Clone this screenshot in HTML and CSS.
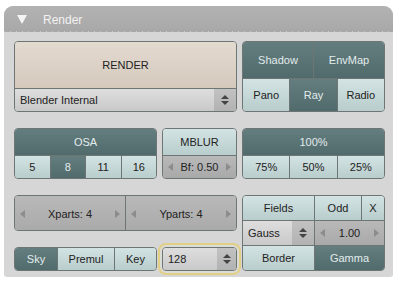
FILE: index.html
```html
<!DOCTYPE html>
<html lang="en">
<head>
    <meta charset="UTF-8">
    <title>Render</title>
    <link rel="stylesheet" href="styles.css">
</head>
<body>
    <div class="panel">
        <div class="panel-head">
            <svg class="toggle" width="10" height="9" viewBox="0 0 10 9"><polygon points="0,0 10,0 5,9" fill="#f4f4f4"/></svg>
            <span>Render</span>
        </div>

        <div class="panel-body">
            <!-- render button + renderer menu -->
            <div class="blk render-blk">
                <div class="row h46"><div class="c beige">RENDER</div></div>
                <div class="row h25">
                    <div class="c menu"><span class="menu-text">Blender Internal</span><span class="menu-arrow"><svg width="8" height="10" viewBox="0 0 8 10"><polygon points="0,4 4,0 8,4" fill="#444"/><polygon points="0,6 4,10 8,6" fill="#444"/></svg></span></div>
                </div>
            </div>

            <div class="blk shade-blk">
                <div class="row h36">
                    <div class="c dk">Shadow</div>
                    <div class="c dk">EnvMap</div>
                </div>
                <div class="row h35">
                    <div class="c lt">Pano</div>
                    <div class="c dk">Ray</div>
                    <div class="c lt">Radio</div>
                </div>
            </div>

            <!-- OSA -->
            <div class="blk osa-blk">
                <div class="row h26"><div class="c dk">OSA</div></div>
                <div class="row h25">
                    <div class="c lt">5</div>
                    <div class="c dk">8</div>
                    <div class="c lt">11</div>
                    <div class="c lt">16</div>
                </div>
            </div>

            <div class="blk mblur-blk">
                <div class="row h26"><div class="c lt">MBLUR</div></div>
                <div class="row h25">
                    <div class="c num"><i class="al"></i><span>Bf: 0.50</span><i class="ar"></i></div>
                </div>
            </div>

            <div class="blk size-blk">
                <div class="row h26"><div class="c dk">100%</div></div>
                <div class="row h25">
                    <div class="c lt">75%</div>
                    <div class="c lt">50%</div>
                    <div class="c lt">25%</div>
                </div>
            </div>

            <!-- parts -->
            <div class="blk parts-blk">
                <div class="row h36">
                    <div class="c num"><i class="al"></i><span>Xparts: 4</span><i class="ar"></i></div>
                    <div class="c num"><i class="al"></i><span>Yparts: 4</span><i class="ar"></i></div>
                </div>
            </div>

            <div class="blk fields-blk">
                <div class="row h25">
                    <div class="c lt w71">Fields</div>
                    <div class="c lt">Odd</div>
                    <div class="c lt w22">X</div>
                </div>
                <div class="row h25">
                    <div class="c menu w71"><span class="menu-text">Gauss</span><span class="menu-arrow"><svg width="8" height="10" viewBox="0 0 8 10"><polygon points="0,4 4,0 8,4" fill="#444"/><polygon points="0,6 4,10 8,6" fill="#444"/></svg></span></div>
                    <div class="c num"><i class="al"></i><span>1.00</span><i class="ar"></i></div>
                </div>
                <div class="row h25">
                    <div class="c lt w71">Border</div>
                    <div class="c dk">Gamma</div>
                </div>
            </div>

            <!-- alpha -->
            <div class="blk alpha-blk">
                <div class="row h24">
                    <div class="c dk w42">Sky</div>
                    <div class="c lt">Premul</div>
                    <div class="c lt w41">Key</div>
                </div>
            </div>

            <div class="blk depth-blk">
                <div class="row h24">
                    <div class="c menu"><span class="menu-text">128</span><span class="menu-arrow"><svg width="8" height="10" viewBox="0 0 8 10"><polygon points="0,4 4,0 8,4" fill="#444"/><polygon points="0,6 4,10 8,6" fill="#444"/></svg></span></div>
                </div>
            </div>
        </div>
    </div>
</body>
</html>
```
FILE: styles.css
```css
body {
    margin: 0;
    background-color: #fff;
    font-family: "Liberation Sans", Arial, sans-serif;
    font-size: 11px;
    color: #222;
}
.panel {
    margin: 6px 0 0 4px;
    width: 389px;
    height: 271px;
    background-color: #d6d6d6;
    border-radius: 9px 9px 3px 3px;
    overflow: hidden;
}
.panel-head {
    height: 26px;
    box-sizing: border-box;
    display: flex;
    align-items: center;
    gap: 16px;
    padding: 1px 0 0 13px;
    color: #f2f2f2;
    font-size: 12px;
    background:
        repeating-linear-gradient(90deg, #c6c6c6 0 1px, transparent 1px 6px) bottom / 100% 1px no-repeat,
        linear-gradient(#b2b2b2, #a8a8a8);
}
.panel-body {
    display: grid;
    grid-template-columns: 143px 75px 143px;
    grid-template-rows: 71px 51px 36px 24px;
    column-gap: 5px;
    row-gap: 16px;
    padding: 9px 0 0 10px;
}
.blk {
    box-sizing: border-box;
    border: 1px solid #6d7575;
    border-radius: 4px;
    overflow: hidden;
    display: flex;
    flex-direction: column;
}
.render-blk { grid-column: 1 / 3; grid-row: 1; }
.shade-blk { grid-column: 3; grid-row: 1; }
.osa-blk { grid-column: 1; grid-row: 2; }
.mblur-blk { grid-column: 2; grid-row: 2; }
.size-blk { grid-column: 3; grid-row: 2; }
.parts-blk { grid-column: 1 / 3; grid-row: 3; }
.fields-blk { grid-column: 3; grid-row: 3 / 5; }
.alpha-blk { grid-column: 1; grid-row: 4; }
.depth-blk {
    grid-column: 2;
    grid-row: 4;
    box-shadow: 0 0 0 2px #dcdcd6, 0 0 0 4px #e2cf86;
}

.row { display: flex; flex: 1; }
.row + .row { border-top: 1px solid #6d7575; }
.h46 { flex: 0 0 46px; }
.h36 { flex: 0 0 36px; }
.h35 { flex: 1; }
.h26 { flex: 0 0 26px; }
.h25 { flex: 1; }
.h24 { flex: 1; }

.c {
    flex: 1;
    display: flex;
    align-items: center;
    justify-content: center;
    white-space: nowrap;
}
.c + .c { border-left: 1px solid #6d7575; }
.w71 { flex: 0 0 71px; }
.w42 { flex: 0 0 42px; }
.w41 { flex: 0 0 41px; }
.w22 { flex: 0 0 22px; }

.beige { background: linear-gradient(#e3dad0, #d5c9bc); }
.dk {
    background: linear-gradient(#647e80, #516a6c);
    color: #e2ecec;
}
.lt { background: linear-gradient(#d3e3e3, #b9cdcd); }
.num {
    justify-content: space-between;
    padding: 0 5px;
    background: linear-gradient(#b9b9b9, #a9a9a9);
}
.al, .ar {
    width: 0;
    height: 0;
    border-top: 4px solid transparent;
    border-bottom: 4px solid transparent;
}
.al { border-right: 5px solid #8c8c8c; }
.ar { border-left: 5px solid #8c8c8c; }

.menu {
    justify-content: space-between;
    background: linear-gradient(#dedede, #c9c9c9);
}
.menu-text { padding-left: 5px; }
.menu-arrow {
    align-self: stretch;
    width: 22px;
    display: flex;
    align-items: center;
    justify-content: center;
    background: linear-gradient(#c2c2c2, #b2b2b2);
}
.depth-blk .menu-arrow { width: 19px; }
```
